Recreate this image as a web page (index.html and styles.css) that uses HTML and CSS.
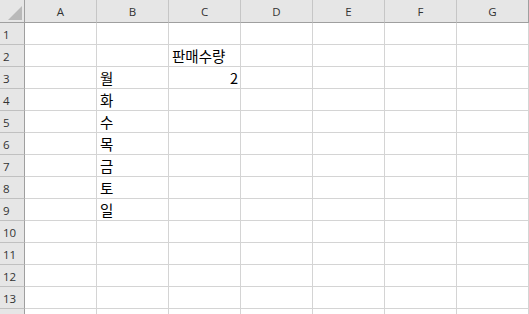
FILE: index.html
```html
<!DOCTYPE html>
<html lang="ko">
<head>
<meta charset="utf-8">
<title>Sheet1</title>
<link rel="stylesheet" href="styles.css">
</head>
<body>
<div class="sheet">
  <div class="corner"><span class="corner-mark"></span></div>
  <div class="col-head">A</div><div class="col-head">B</div><div class="col-head">C</div><div class="col-head">D</div><div class="col-head">E</div><div class="col-head">F</div><div class="col-head">G</div>

  <div class="row-head">1</div><div class="cell"></div><div class="cell"></div><div class="cell"></div><div class="cell"></div><div class="cell"></div><div class="cell"></div><div class="cell"></div>
  <div class="row-head">2</div><div class="cell"></div><div class="cell"></div><div class="cell">판매수량</div><div class="cell"></div><div class="cell"></div><div class="cell"></div><div class="cell"></div>
  <div class="row-head">3</div><div class="cell"></div><div class="cell">월</div><div class="cell num">2</div><div class="cell"></div><div class="cell"></div><div class="cell"></div><div class="cell"></div>
  <div class="row-head">4</div><div class="cell"></div><div class="cell">화</div><div class="cell"></div><div class="cell"></div><div class="cell"></div><div class="cell"></div><div class="cell"></div>
  <div class="row-head">5</div><div class="cell"></div><div class="cell">수</div><div class="cell"></div><div class="cell"></div><div class="cell"></div><div class="cell"></div><div class="cell"></div>
  <div class="row-head">6</div><div class="cell"></div><div class="cell">목</div><div class="cell"></div><div class="cell"></div><div class="cell"></div><div class="cell"></div><div class="cell"></div>
  <div class="row-head">7</div><div class="cell"></div><div class="cell">금</div><div class="cell"></div><div class="cell"></div><div class="cell"></div><div class="cell"></div><div class="cell"></div>
  <div class="row-head">8</div><div class="cell"></div><div class="cell">토</div><div class="cell"></div><div class="cell"></div><div class="cell"></div><div class="cell"></div><div class="cell"></div>
  <div class="row-head">9</div><div class="cell"></div><div class="cell">일</div><div class="cell"></div><div class="cell"></div><div class="cell"></div><div class="cell"></div><div class="cell"></div>
  <div class="row-head">10</div><div class="cell"></div><div class="cell"></div><div class="cell"></div><div class="cell"></div><div class="cell"></div><div class="cell"></div><div class="cell"></div>
  <div class="row-head">11</div><div class="cell"></div><div class="cell"></div><div class="cell"></div><div class="cell"></div><div class="cell"></div><div class="cell"></div><div class="cell"></div>
  <div class="row-head">12</div><div class="cell"></div><div class="cell"></div><div class="cell"></div><div class="cell"></div><div class="cell"></div><div class="cell"></div><div class="cell"></div>
  <div class="row-head">13</div><div class="cell"></div><div class="cell"></div><div class="cell"></div><div class="cell"></div><div class="cell"></div><div class="cell"></div><div class="cell"></div>
  <div class="row-head"></div><div class="cell"></div><div class="cell"></div><div class="cell"></div><div class="cell"></div><div class="cell"></div><div class="cell"></div><div class="cell"></div>
</div>
</body>
</html>
```

FILE: styles.css
```css
html, body {
  margin: 0;
  padding: 0;
  background: #ffffff;
  overflow: hidden;
}

.sheet {
  display: grid;
  grid-template-columns: 25px repeat(7, 72px);
  grid-template-rows: 23px;
  grid-auto-rows: 22px;
  width: 529px;
}

.sheet > div {
  box-sizing: border-box;
}

/* top-left select-all box */
.corner {
  position: relative;
  background: #e6e6e6;
  border-right: 1px solid #9f9f9f;
  border-bottom: 1px solid #9f9f9f;
}

.corner-mark {
  position: absolute;
  right: 2px;
  bottom: 2px;
  width: 0;
  height: 0;
  border-left: 14px solid transparent;
  border-bottom: 14px solid #b9b9b9;
}

.col-head {
  background: #e6e6e6;
  border-right: 1px solid #c6c6c6;
  border-bottom: 1px solid #9f9f9f;
  color: #333333;
  font-family: "Open Sans", "Noto Sans", sans-serif;
  font-size: 11.5px;
  display: flex;
  align-items: center;
  justify-content: center;
  padding-top: 1px;
}

.col-head:nth-child(8) {
  border-right-color: #9f9f9f;
}

.row-head {
  background: #e6e6e6;
  border-right: 1px solid #9f9f9f;
  border-bottom: 1px solid #c0c0c0;
  color: #333333;
  font-family: "Open Sans", "Noto Sans", sans-serif;
  font-size: 11.5px;
  display: flex;
  align-items: center;
  padding-left: 3px;
  padding-top: 1px;
}

.cell {
  border-right: 1px solid #d4d4d4;
  border-bottom: 1px solid #d4d4d4;
  color: #000000;
  font-family: "Noto Sans CJK KR", "Noto Sans", sans-serif;
  font-size: 14.5px;
  line-height: 1;
  display: flex;
  align-items: flex-end;
  padding: 0 2px 3px 3px;
  white-space: nowrap;
}

.cell.num {
  justify-content: flex-end;
}
```
